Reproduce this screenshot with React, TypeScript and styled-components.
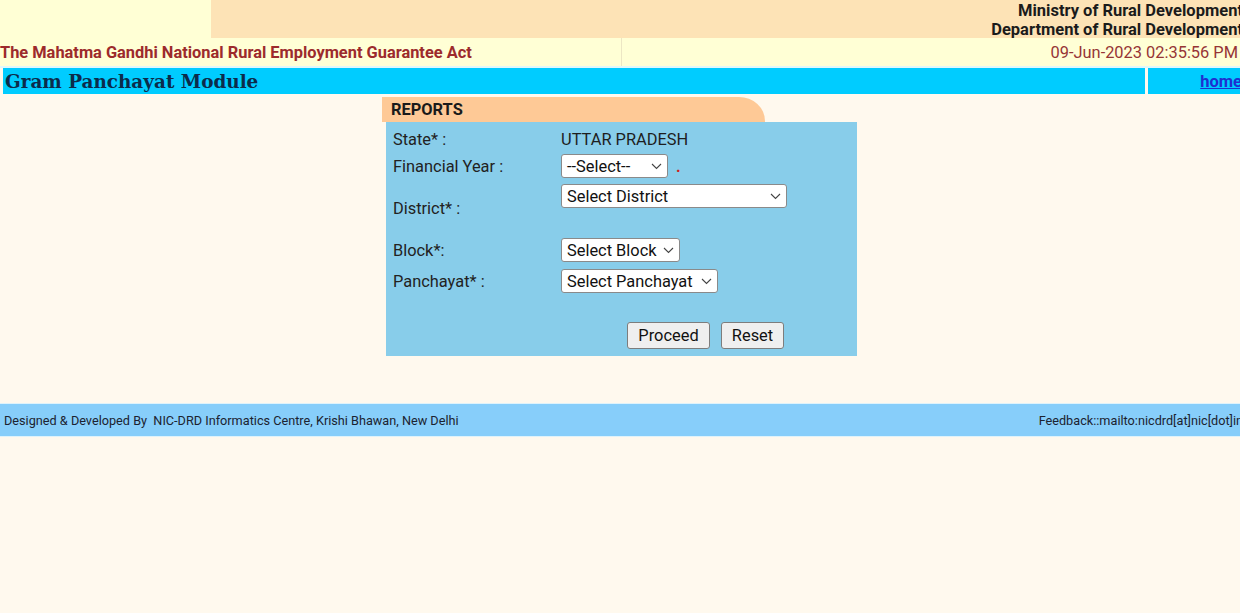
import React from "react";
import styled, { createGlobalStyle } from "styled-components";

const Global = createGlobalStyle`
  html, body { margin: 0; padding: 0; }
  body {
    background: #fff9ee;
    font-family: Roboto, "Noto Sans", "Liberation Sans", sans-serif;
    color: #222;
    overflow: hidden;
    width: 1240px;
    height: 613px;
  }
`;

const Page = styled.div`
  width: 1240px;
  display: flex;
  flex-direction: column;
`;

const TopRow = styled.div`
  display: grid;
  grid-template-columns: 211px 1fr;
  height: 38px;
`;

const TopLeft = styled.div`
  background: #ffffd5;
`;

const TopRight = styled.div`
  background: #fde3b6;
  display: flex;
  flex-direction: column;
  align-items: flex-end;
  justify-content: center;
  overflow: hidden;
  font-weight: 700;
  font-size: 16.5px;
  line-height: 19px;
  color: #1b1b1b;
  white-space: nowrap;
  padding-top: 1px;
`;

const TopLine = styled.div<{ $cut: number }>`
  margin-right: ${(p) => -p.$cut}px;
`;

const ActRow = styled.div`
  display: grid;
  grid-template-columns: 621px 1fr;
  height: 28px;
  background: #ffffd5;
`;

const ActCell = styled.div<{ $right?: boolean }>`
  display: flex;
  align-items: center;
  justify-content: ${(p) => (p.$right ? "flex-end" : "flex-start")};
  padding-right: ${(p) => (p.$right ? "2px" : "0")};
  border-left: ${(p) => (p.$right ? "1px solid #ece6c4" : "none")};
  font-size: 16.4px;
  font-weight: ${(p) => (p.$right ? 400 : 700)};
  color: ${(p) => (p.$right ? "#963535" : "#9c2a2c")};
  white-space: nowrap;
`;

const BarRow = styled.div`
  display: flex;
  gap: 3px;
  padding: 2px 0 0 3px;
  height: 28px;
  box-sizing: border-box;
  background: linear-gradient(#dff7fb, #dff7fb) top / 100% 2px no-repeat;
`;

const BarMain = styled.div`
  flex: 1;
  background: #00ccff;
  display: flex;
  align-items: center;
  padding-left: 2px;
  font-family: "DejaVu Serif", "Liberation Serif", serif;
  font-weight: 700;
  font-size: 18.4px;
  color: #0c2b4b;
  white-space: nowrap;
`;

const BarHome = styled.div`
  width: 92px;
  background: #00ccff;
  display: flex;
  align-items: center;
  justify-content: flex-end;
  overflow: hidden;
`;

const HomeLink = styled.a`
  color: #1f2fd0;
  font-weight: 700;
  font-size: 16.5px;
  text-decoration: underline;
  margin-right: -2px;
`;

const FormWrap = styled.div`
  width: 475px;
  margin: 3px auto 0 382px;
  display: flex;
  flex-direction: column;
`;

const Tab = styled.div`
  width: 383px;
  height: 25px;
  box-sizing: border-box;
  background: #fec996;
  border-top-right-radius: 26px 24px;
  display: flex;
  align-items: center;
  padding-left: 9px;
  font-weight: 700;
  font-size: 16.4px;
  color: #1a1a1a;
`;

const Panel = styled.div`
  margin-left: 4px;
  width: 471px;
  height: 234px;
  box-sizing: border-box;
  background: #88cdea;
  padding: 5px 0 0 7px;
  display: flex;
  flex-direction: column;
`;

const Row = styled.div<{ $h: number; $top?: boolean }>`
  display: grid;
  grid-template-columns: 168px 1fr;
  height: ${(p) => p.$h}px;
  align-items: ${(p) => (p.$top ? "start" : "center")};
`;

const Label = styled.div`
  font-size: 16.4px;
  color: #222;
  align-self: center;
  white-space: nowrap;
`;

const Value = styled.div<{ $pt?: number }>`
  display: flex;
  align-items: center;
  gap: 8px;
  padding-top: ${(p) => p.$pt ?? 0}px;
  font-size: 16.4px;
  color: #1e1e1e;
`;

const SelectBox = styled.div<{ $w: number }>`
  position: relative;
  width: ${(p) => p.$w}px;
  height: 24px;
  box-sizing: border-box;
  background: #fff;
  border: 1px solid #8a8a8a;
  border-radius: 3px;
  display: flex;
  align-items: center;
  padding-left: 5px;
  font-size: 16.4px;
  color: #111;
  white-space: nowrap;
`;

const Chevron = styled.svg`
  position: absolute;
  right: 5px;
  top: 8px;
`;

const RedDot = styled.span`
  color: #d02020;
  font-size: 16px;
  font-weight: 700;
`;

const ButtonRow = styled.div`
  display: flex;
  gap: 11px;
  padding-left: 234px;
  margin-top: 24px;
`;

const Button = styled.button<{ $w: number }>`
  width: ${(p) => p.$w}px;
  height: 27px;
  background: #efefef;
  border: 1px solid #7d7d7d;
  border-radius: 3px;
  font-family: Roboto, "Noto Sans", sans-serif;
  font-size: 16.4px;
  color: #111;
  padding: 0;
`;

const Footer = styled.div`
  margin-top: 48px;
  height: 32px;
  background: #87cefa;
  display: flex;
  align-items: center;
  justify-content: space-between;
  padding-left: 4px;
  font-size: 12.7px;
  color: #1c2330;
  white-space: nowrap;
  overflow: hidden;
  box-shadow: 0 -1px 0 #dff3fb, 0 1px 0 #dff3fb;
`;

const FooterRight = styled.span`
  margin-right: -3px;
`;

const Select: React.FC<{ w: number; text: string }> = ({ w, text }) => (
  <SelectBox $w={w}>
    {text}
    <Chevron width="11" height="7" viewBox="0 0 11 7">
      <path d="M1 1 L5.5 5.5 L10 1" fill="none" stroke="#444" strokeWidth="1.1" />
    </Chevron>
  </SelectBox>
);

export default function App() {
  return (
    <Page>
      <Global />
      <TopRow>
        <TopLeft />
        <TopRight>
          <TopLine $cut={3}>Ministry of Rural Development</TopLine>
          <TopLine $cut={3}>Department of Rural Development</TopLine>
        </TopRight>
      </TopRow>
      <ActRow>
        <ActCell>The Mahatma Gandhi National Rural Employment Guarantee Act</ActCell>
        <ActCell $right>09-Jun-2023 02:35:56 PM</ActCell>
      </ActRow>
      <BarRow>
        <BarMain>Gram Panchayat Module</BarMain>
        <BarHome>
          <HomeLink href="#">home</HomeLink>
        </BarHome>
      </BarRow>
      <FormWrap>
        <Tab>REPORTS</Tab>
        <Panel>
          <Row $h={25}>
            <Label>State* :</Label>
            <Value>UTTAR PRADESH</Value>
          </Row>
          <Row $h={28}>
            <Label>Financial Year :</Label>
            <Value>
              <Select w={107} text="--Select--" />
              <RedDot>.</RedDot>
            </Value>
          </Row>
          <Row $h={56} $top>
            <Label>District* :</Label>
            <Value $pt={4}>
              <Select w={226} text="Select District" />
            </Value>
          </Row>
          <Row $h={28}>
            <Label>Block*:</Label>
            <Value>
              <Select w={119} text="Select Block" />
            </Value>
          </Row>
          <Row $h={34}>
            <Label>Panchayat* :</Label>
            <Value>
              <Select w={157} text="Select Panchayat" />
            </Value>
          </Row>
          <ButtonRow>
            <Button $w={83}>Proceed</Button>
            <Button $w={63}>Reset</Button>
          </ButtonRow>
        </Panel>
      </FormWrap>
      <Footer>
        <span>Designed &amp; Developed By&nbsp; NIC-DRD Informatics Centre, Krishi Bhawan, New Delhi</span>
        <FooterRight>Feedback::mailto:nicdrd[at]nic[dot]in</FooterRight>
      </Footer>
    </Page>
  );
}
